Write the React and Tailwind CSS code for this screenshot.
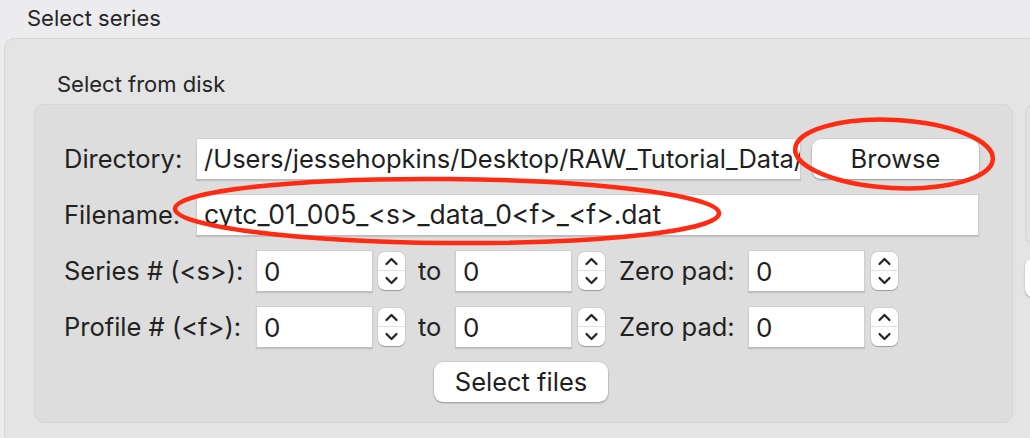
const font = { fontFamily: 'Inter, "Liberation Sans", Arial, sans-serif' };

function Stepper() {
  return (
    <div className="flex h-[38px] w-[27px] flex-col items-center justify-between rounded-[7px] bg-white shadow-[0_1px_1px_rgba(0,0,0,0.25)] ring-1 ring-black/5">
      <svg width="27" height="19" viewBox="0 0 27 19">
        <path d="M8.5 12 L13.5 7 L18.5 12" fill="none" stroke="#222" strokeWidth="2.2" strokeLinecap="round" strokeLinejoin="round" />
        <line x1="0" y1="18.5" x2="27" y2="18.5" stroke="#e2e2e2" strokeWidth="1" />
      </svg>
      <svg width="27" height="19" viewBox="0 0 27 19">
        <path d="M8.5 7 L13.5 12 L18.5 7" fill="none" stroke="#222" strokeWidth="2.2" strokeLinecap="round" strokeLinejoin="round" />
      </svg>
    </div>
  );
}

function Field({ value, className }) {
  return (
    <div className={`flex h-[42px] shrink-0 items-center overflow-hidden whitespace-nowrap border border-[#cfcfcf] border-b-[#bdbdbd] bg-white pl-[7px] text-[#1f1f1f] shadow-[0_1px_1px_rgba(0,0,0,0.12)] ${className}`}>
      {value}
    </div>
  );
}

function Button({ children, className }) {
  return (
    <div className={`flex h-[40px] shrink-0 items-center justify-center rounded-[9px] bg-white text-[25.5px] text-[#1f1f1f] shadow-[0_1px_2px_rgba(0,0,0,0.3)] ring-1 ring-black/5 ${className}`}>
      {children}
    </div>
  );
}

function NumRow({ label }) {
  return (
    <div className="flex h-[42px] items-center text-[25.5px] text-[#222]">
      <div className="w-[192px] shrink-0">{label}</div>
      <Field value="0" className="w-[117px] text-[26px]" />
      <div className="ml-[5px]"><Stepper /></div>
      <div className="ml-[13px] w-[37px] shrink-0">to</div>
      <Field value="0" className="w-[117px] text-[26px]" />
      <div className="ml-[6px]"><Stepper /></div>
      <div className="ml-[14px] w-[129px] shrink-0">Zero pad:</div>
      <Field value="0" className="w-[117px] text-[26px]" />
      <div className="ml-[6px]"><Stepper /></div>
    </div>
  );
}

export default function App() {
  return (
    <div className="relative h-[438px] w-[1030px] overflow-hidden bg-[#ececee]" style={font}>
      <div className="h-[38px] pl-[27px] pt-[4px] text-[22px] leading-[28px] text-[#262626]">Select series</div>

      <div className="ml-[4px] h-[420px] w-[1100px] rounded-tl-[10px] border-l border-t border-[#d6d7d6] bg-[#e3e4e3]">
        <div className="pl-[52px] pt-[31px] text-[22px] leading-[28px] text-[#262626]">Select from disk</div>

        <div className="mt-[6px] flex items-start gap-[12px] pl-[29px]">
          <div className="h-[319px] w-[979px] shrink-0 rounded-[10px] border border-[#d4d5d4] bg-[#dcdddc] pl-[29px] pt-[33px]">
            <div className="flex flex-col gap-[14px]">
              <div className="flex h-[42px] items-center text-[25.5px] text-[#222]">
                <div className="w-[132px] shrink-0">Directory:</div>
                <Field value="/Users/jessehopkins/Desktop/RAW_Tutorial_Data/" className="w-[605px] text-[25.5px]" />
                <Button className="ml-[11px] w-[167px]">Browse</Button>
              </div>
              <div className="flex h-[42px] items-center text-[25.5px] text-[#222]">
                <div className="w-[132px] shrink-0">Filename:</div>
                <Field value="cytc_01_005_<s>_data_0<f>_<f>.dat" className="w-[783px] text-[26.5px]" />
              </div>
              <NumRow label="Series # (<s>):" />
              <NumRow label="Profile # (<f>):" />
            </div>
            <div className="mt-[14px] flex">
              <Button className="ml-[370px] w-[174px]">Select files</Button>
            </div>
          </div>

          <div className="flex shrink-0 flex-col gap-[13px]">
            <div className="h-[142px] w-[60px] rounded-[10px] border border-[#d4d5d4] bg-[#e0e1e0]" />
            <div className="h-[38px] w-[60px] rounded-[8px] bg-white shadow-[0_1px_2px_rgba(0,0,0,0.3)]" />
          </div>
        </div>
      </div>

      <svg className="pointer-events-none absolute left-0 top-0" width="1030" height="438">
        <ellipse cx="894" cy="154" rx="99" ry="34" transform="rotate(3 894 154)" fill="none" stroke="#ff2a12" strokeWidth="4.5" />
        <ellipse cx="447" cy="211" rx="272" ry="32" transform="rotate(0.5 447 211)" fill="none" stroke="#ff2a12" strokeWidth="4.5" />
      </svg>
    </div>
  );
}
